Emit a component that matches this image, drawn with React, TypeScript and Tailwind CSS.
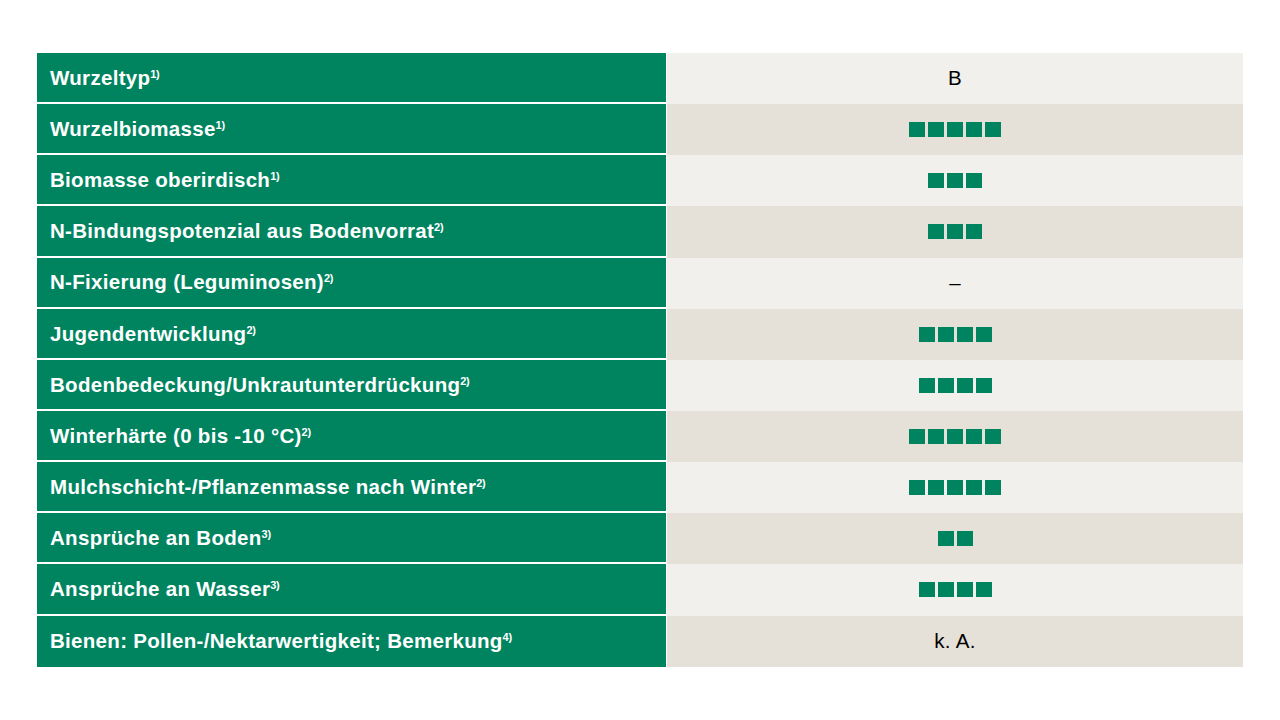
import React from "react";

type Row = { label: string; sup: string; value: string | number };

const rows: Row[] = [
  { label: "Wurzeltyp", sup: "1)", value: "B" },
  { label: "Wurzelbiomasse", sup: "1)", value: 5 },
  { label: "Biomasse oberirdisch", sup: "1)", value: 3 },
  { label: "N-Bindungspotenzial aus Bodenvorrat", sup: "2)", value: 3 },
  { label: "N-Fixierung (Leguminosen)", sup: "2)", value: "–" },
  { label: "Jugendentwicklung", sup: "2)", value: 4 },
  { label: "Bodenbedeckung/Unkrautunterdrückung", sup: "2)", value: 4 },
  { label: "Winterhärte (0 bis -10 °C)", sup: "2)", value: 5 },
  { label: "Mulchschicht-/Pflanzenmasse nach Winter", sup: "2)", value: 5 },
  { label: "Ansprüche an Boden", sup: "3)", value: 2 },
  { label: "Ansprüche an Wasser", sup: "3)", value: 4 },
  { label: "Bienen: Pollen-/Nektarwertigkeit; Bemerkung", sup: "4)", value: "k. A." },
];

export default function App() {
  return (
    <div
      className="w-[1280px] h-[720px] bg-white pt-[53px] pl-[37px]"
      style={{ fontFamily: '"Liberation Sans", Arial, sans-serif' }}
    >
      <div className="flex flex-col w-[1206px]">
        {rows.map((r, i) => (
          <div key={i} className="flex h-[51.15px]">
            <div
              className={`w-[629px] bg-[#008460] flex items-center pl-[13px] text-white font-bold text-[20.5px] tracking-[0.3px] leading-none ${
                i < rows.length - 1 ? "border-b-2 border-white" : ""
              }`}
            >
              <span className="pt-[1px] whitespace-nowrap">
                {r.label}
                <span className="inline-block align-top text-[11px] tracking-[-0.3px] font-bold relative top-[1px]">
                  {r.sup}
                </span>
              </span>
            </div>
            <div
              className={`flex-1 ml-[1px] flex items-center justify-center ${
                i % 2 === 0 ? "bg-[#f1f0ec]" : "bg-[#e5e0d8]"
              }`}
            >
              {typeof r.value === "number" ? (
                <div className="flex gap-[3px]">
                  {Array.from({ length: r.value }).map((_, k) => (
                    <div key={k} className="w-[16px] h-[15px] bg-[#008460]" />
                  ))}
                </div>
              ) : (
                <span className="text-[20.5px] tracking-[0.3px] text-black leading-none">{r.value}</span>
              )}
            </div>
          </div>
        ))}
      </div>
    </div>
  );
}
